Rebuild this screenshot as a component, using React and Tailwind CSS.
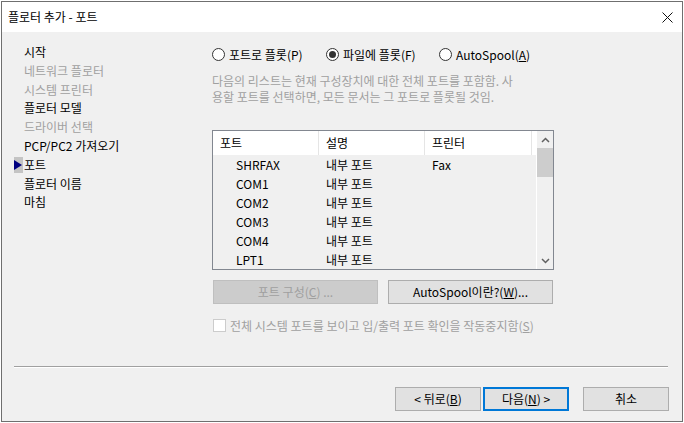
const FONT = { fontFamily: '"Noto Sans CJK KR", "Noto Sans", sans-serif' };

const navItems = [
  { label: "시작", enabled: true },
  { label: "네트워크 플로터", enabled: false },
  { label: "시스템 프린터", enabled: false },
  { label: "플로터 모델", enabled: true },
  { label: "드라이버 선택", enabled: false },
  { label: "PCP/PC2 가져오기", enabled: true },
  { label: "포트", enabled: true, current: true },
  { label: "플로터 이름", enabled: true },
  { label: "마침", enabled: true },
];

const ports = [
  { port: "SHRFAX", desc: "내부 포트", printer: "Fax" },
  { port: "COM1", desc: "내부 포트", printer: "" },
  { port: "COM2", desc: "내부 포트", printer: "" },
  { port: "COM3", desc: "내부 포트", printer: "" },
  { port: "COM4", desc: "내부 포트", printer: "" },
  { port: "LPT1", desc: "내부 포트", printer: "" },
];

const Radio = ({ checked, children }) => (
  <label className="flex items-center gap-[4px] text-[12px] leading-[13px] text-black">
    <span className="w-[13px] h-[13px] rounded-full border border-[#333333] bg-white flex items-center justify-center">
      {checked && <span className="w-[7px] h-[7px] rounded-full bg-[#333333]" />}
    </span>
    <span>{children}</span>
  </label>
);

const Button = ({ children, className = "", disabled, primary }) => (
  <div
    className={`h-[24px] flex items-center justify-center text-[12px] ${
      disabled
        ? "bg-[#cccccc] border border-[#bfbfbf] text-[#9f9f9f]"
        : primary
        ? "bg-[#e1e1e1] border-2 border-[#0078d7] text-black"
        : "bg-[#e1e1e1] border border-[#adadad] text-black"
    } ${className}`}
  >
    {children}
  </div>
);

export default function App() {
  return (
    <div className="w-[684px] h-[423px] bg-white pt-[1px] pl-[1px]" style={FONT}>
      <div className="w-[682px] h-[421px] border border-[#6f6f6f] flex flex-col">
        {/* title bar */}
        <div className="h-[30px] bg-white flex items-center justify-between pl-[6px] pr-[9px]">
          <span className="text-[12px] text-black">플로터 추가 - 포트</span>
          <svg width="11" height="11" viewBox="0 0 11 11">
            <path d="M0.5 0.5 L10.5 10.5 M10.5 0.5 L0.5 10.5" stroke="#111" strokeWidth="1" />
          </svg>
        </div>

        {/* body */}
        <div className="flex-1 bg-[#f0f0f0] flex flex-col">
          <div className="h-[334px] flex">
            {/* left nav */}
            <div className="w-[210px] pl-[12px] pt-[10.6px] flex flex-col">
              {navItems.map((item) => (
                <div key={item.label} className="h-[18.8px] flex items-center">
                  <div className="w-[10px] h-[16px] flex items-center">
                    {item.current && (
                      <svg width="9" height="16" viewBox="0 0 9 16">
                        <rect width="9" height="16" fill="#c4c4c4" />
                        <path d="M0 3 L8 8 L0 13 Z" fill="#000080" />
                      </svg>
                    )}
                  </div>
                  <span
                    className={`text-[12px] leading-[16px] ${
                      item.enabled ? "text-black" : "text-[#a0a0a0]"
                    }`}
                  >
                    {item.label}
                  </span>
                </div>
              ))}
            </div>

            {/* right panel */}
            <div className="w-[342px] flex flex-col">
              <div className="mt-[16px] h-[13px] flex items-center">
                <div className="w-[114px]">
                  <Radio>포트로 플롯(P)</Radio>
                </div>
                <div className="w-[113px]">
                  <Radio checked>파일에 플롯(F)</Radio>
                </div>
                <Radio>
                  AutoSpool(<span className="underline">A</span>)
                </Radio>
              </div>

              <div className="mt-[11.5px] text-[12px] leading-[16px] text-[#a0a0a0] whitespace-nowrap">
                <div>다음의 리스트는 현재 구성장치에 대한 전체 포트를 포함함. 사</div>
                <div>용할 포트를 선택하면, 모든 문서는 그 포트로 플롯될 것임.</div>
              </div>

              {/* list box */}
              <div className="mt-[25.5px] h-[140px] w-[342px] border border-[#828790] flex">
                <div className="flex-1 flex flex-col">
                  <div className="h-[24px] bg-white flex text-[12px] text-black">
                    <div className="w-[106px] border-r border-[#e5e5e5] pl-[7px] flex items-center">포트</div>
                    <div className="w-[106px] border-r border-[#e5e5e5] pl-[7px] flex items-center">설명</div>
                    <div className="w-[107px] border-r border-[#e5e5e5] pl-[7px] flex items-center">프린터</div>
                  </div>
                  <div className="pt-[0.5px]">
                    {ports.map((p) => (
                      <div key={p.port} className="h-[19px] flex items-center text-[12px] text-black">
                        <div className="w-[106px] pl-[23px]">{p.port}</div>
                        <div className="w-[106px] pl-[7px]">{p.desc}</div>
                        <div className="w-[107px] pl-[7px]">{p.printer}</div>
                      </div>
                    ))}
                  </div>
                </div>
                {/* scrollbar */}
                <div className="w-[17px] border-l border-white flex flex-col items-stretch">
                  <div className="h-[17px] flex items-center justify-center">
                    <svg width="9" height="6" viewBox="0 0 9 6">
                      <path d="M1 5 L4.5 1.5 L8 5" stroke="#606060" strokeWidth="1.5" fill="none" />
                    </svg>
                  </div>
                  <div className="h-[29px] bg-[#cdcdcd]" />
                  <div className="flex-1" />
                  <div className="h-[17px] flex items-center justify-center">
                    <svg width="9" height="6" viewBox="0 0 9 6">
                      <path d="M1 1 L4.5 4.5 L8 1" stroke="#606060" strokeWidth="1.5" fill="none" />
                    </svg>
                  </div>
                </div>
              </div>

              <div className="mt-[10px] ml-[1px] flex gap-[10px]">
                <Button disabled className="w-[165px]">
                  포트 구성(<span className="underline">C</span>) ...
                </Button>
                <Button className="w-[165px]">
                  AutoSpool이란?(<span className="underline">W</span>)...
                </Button>
              </div>

              <div className="mt-[15px] ml-[1px] h-[13px] flex items-center gap-[4px]">
                <span className="w-[13px] h-[13px] border border-[#cccccc] bg-white" />
                <span className="text-[12px] text-[#a0a0a0]">
                  전체 시스템 포트를 보이고 입/출력 포트 확인을 작동중지함(<span className="underline">S</span>)
                </span>
              </div>
            </div>
          </div>

          {/* separator */}
          <div className="ml-[12px] w-[654px] border-t border-[#a0a0a0] border-b border-b-white" />

          {/* bottom buttons */}
          <div className="mt-[19px] flex justify-end pr-[13px]">
            <Button className="w-[86px]">
              &lt; 뒤로(<span className="underline">B</span>)
            </Button>
            <Button primary className="w-[86px] ml-[2px]">
              다음(<span className="underline">N</span>) &gt;
            </Button>
            <Button className="w-[86px] ml-[14px]">취소</Button>
          </div>
        </div>
      </div>
    </div>
  );
}
